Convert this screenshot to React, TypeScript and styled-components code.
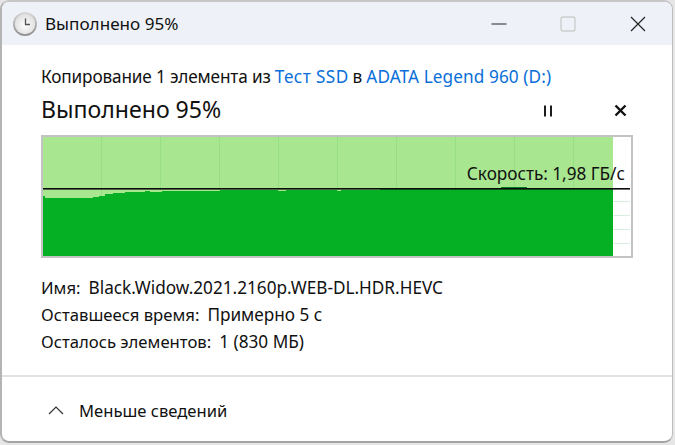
import React from "react";
import styled, { createGlobalStyle } from "styled-components";

const Global = createGlobalStyle`
  html, body { margin: 0; padding: 0; width: 675px; height: 445px; overflow: hidden; background: #d8d8d8; }
  * { box-sizing: border-box; }
`;

const Desktop = styled.div`
  width: 675px;
  height: 445px;
  padding: 0 2px 2px 0;
  background: #e6e6e6;
  font-family: "Noto Sans", "Open Sans", sans-serif;
  color: #111;
`;

const Win = styled.main`
  width: 673px;
  height: 443px;
  display: flex;
  flex-direction: column;
  background: #fff;
  border-radius: 9px 9px 9px 9px;
  border-style: solid;
  border-width: 2px 1px 2px 2px;
  border-color: #c6c6c6 #bdbdbd #a4a4a4 #b4b4b4;
  overflow: hidden;
`;

const TitleBar = styled.header`
  height: 43px;
  flex: none;
  display: flex;
  align-items: center;
  background: #eef2f8;
  padding-left: 10px;
`;

const TitleText = styled.span`
  margin-left: 7px;
  font-size: 17.1px;
  line-height: 20px;
  color: #111;
  flex: 1;
`;

const WinButton = styled.div<{ $w: number }>`
  width: ${(p) => p.$w}px;
  display: flex;
  justify-content: center;
  align-items: center;
  height: 20px;
`;

const Body = styled.section`
  padding: 22px 39px 0;
  flex: 1;
  display: flex;
  flex-direction: column;
`;

const CopyLine = styled.div`
  font-size: 17.2px;
  line-height: 20px;
  height: 20px;
  white-space: nowrap;
  display: flex;
  gap: 4px;
`;

const Lead = styled.span<{ $ls: number }>`
  letter-spacing: ${(p) => p.$ls}px;
`;

const Link = styled.span<{ $ls: number }>`
  color: #0a6fd8;
  letter-spacing: ${(p) => p.$ls}px;
`;

const HeadRow = styled.div`
  display: flex;
  align-items: center;
  height: 30px;
  margin-top: 7px;
  margin-bottom: 1px;
`;

const Heading = styled.h1`
  margin: 0;
  flex: 1;
  font-size: 23.1px;
  font-weight: 400;
  line-height: 30px;
  white-space: nowrap;
`;

const ActionIcon = styled.div<{ $mr: number }>`
  display: flex;
  margin-top: 3px;
  margin-right: ${(p) => p.$mr}px;
`;

const Chart = styled.div`
  position: relative;
  width: 592px;
  height: 123px;
  margin-top: 10px;
  border: 2px solid #c3c3c3;
  background: #fff;
`;

const ChartSvg = styled.svg`
  display: block;
`;

const Speed = styled.span`
  position: absolute;
  right: 6px;
  top: 27px;
  font-size: 17.2px;
  line-height: 20px;
  white-space: nowrap;
  color: #111;
`;

const Details = styled.dl`
  margin: 16px 0 0;
  display: flex;
  flex-direction: column;
`;

const DetailRow = styled.div`
  height: 27px;
  display: flex;
  align-items: center;
  gap: 8px;
  font-size: 17.2px;
  white-space: nowrap;
`;

const Term = styled.dt`
  font-size: 16.7px;
`;

const Value = styled.dd`
  margin: 0;
`;

const Footer = styled.footer`
  height: 66px;
  flex: none;
  border-top: 2px solid #e2e2e2;
  display: flex;
  align-items: center;
  padding-left: 46px;
  padding-top: 3px;
  gap: 15px;
  font-size: 16.6px;
`;

const profile: [number, number][] = [
  [0, 196], [2, 198], [50, 197], [56, 196], [62, 194], [70, 193], [82, 192], [102, 191], [107, 192],
  [119, 191], [177, 190], [235, 191], [243, 190], [294, 191], [298, 190], [337, 189], [458, 189], [484, 189],
];

const X0 = 43;
const Y0 = 137;
const RIGHT = 570;

function darkPath() {
  let d = `M0 119`;
  let prev = profile[0][1] - Y0;
  d += ` L0 ${prev}`;
  profile.forEach(([x, y]) => {
    d += ` L${x} ${prev} L${x} ${y - Y0}`;
    prev = y - Y0;
  });
  d += ` L${RIGHT} ${prev} L${RIGHT} 119 Z`;
  return d;
}

const vLines = [101, 160, 219, 278, 337, 396, 455, 514, 573].map((x) => x - X0);
const hLines = [201, 215, 229, 243].map((y) => y - Y0);

function SpeedChart() {
  return (
    <ChartSvg width="588" height="119" viewBox="0 0 588 119">
      <rect x="0" y="0" width={RIGHT} height="64" fill="#a8e690" />
      {vLines.map((x) => (
        <rect key={x} x={x} y="0" width="1" height="62" fill="#98de84" />
      ))}
      {hLines.map((y) => (
        <rect key={y} x={RIGHT} y={y} width="17" height="1" fill="#d6eede" />
      ))}
      <path d={darkPath()} fill="#06b025" />
      <rect x="458" y="50" width="26" height="1" fill="#0a7a20" />
      <rect x="0" y="51" width="587" height="1.6" fill="#0c0c0c" />
    </ChartSvg>
  );
}

function Clock() {
  return (
    <svg width="26" height="26" viewBox="0 0 26 26">
      <defs>
        <linearGradient id="rim" x1="0" y1="0" x2="0" y2="1">
          <stop offset="0" stopColor="#d8d8d8" />
          <stop offset="1" stopColor="#8e8e8e" />
        </linearGradient>
        <radialGradient id="face" cx="0.5" cy="0.55" r="0.6">
          <stop offset="0" stopColor="#fdfdfd" />
          <stop offset="1" stopColor="#dcdcdc" />
        </radialGradient>
      </defs>
      <circle cx="13" cy="13" r="12" fill="url(#rim)" />
      <circle cx="13" cy="13" r="10.2" fill="url(#face)" />
      <path d="M13.5 7.5V13.5H18" fill="none" stroke="#555" strokeWidth="1.3" />
    </svg>
  );
}

export default function App() {
  return (
    <>
      <Global />
      <Desktop>
        <Win>
          <TitleBar>
            <Clock />
            <TitleText>Выполнено 95%</TitleText>
            <WinButton $w={67}>
              <svg width="16" height="16" viewBox="0 0 16 16">
                <path d="M0.5 8H15.5" stroke="#222" strokeWidth="1" />
              </svg>
            </WinButton>
            <WinButton $w={72}>
              <svg width="16" height="16" viewBox="0 0 16 16">
                <rect x="1" y="1" width="14" height="14" rx="2" fill="none" stroke="#cdcdcd" strokeWidth="1.4" />
              </svg>
            </WinButton>
            <WinButton $w={68}>
              <svg width="16" height="16" viewBox="0 0 16 16">
                <path d="M1 1L15 15M15 1L1 15" stroke="#222" strokeWidth="1.2" />
              </svg>
            </WinButton>
          </TitleBar>
          <Body>
            <CopyLine>
              <Lead $ls={-0.15}>Копирование 1 элемента из</Lead>
              <Link $ls={0.4}>Тест SSD</Link>
              <Lead $ls={0}>в</Lead>
              <Link $ls={0.1}>ADATA Legend 960 (D:)</Link>
            </CopyLine>
            <HeadRow>
              <Heading>Выполнено 95%</Heading>
              <ActionIcon $mr={60}>
                <svg width="12" height="12" viewBox="0 0 12 12">
                  <path d="M3 0.5V11.5M9 0.5V11.5" stroke="#111" strokeWidth="1.9" />
                </svg>
              </ActionIcon>
              <ActionIcon $mr={6}>
                <svg width="13" height="13" viewBox="0 0 13 13">
                  <path d="M1.5 1.5L11.5 11.5M11.5 1.5L1.5 11.5" stroke="#111" strokeWidth="2.4" />
                </svg>
              </ActionIcon>
            </HeadRow>
            <Chart>
              <SpeedChart />
              <Speed>Скорость: 1,98 ГБ/с</Speed>
            </Chart>
            <Details>
              <DetailRow>
                <Term>Имя:</Term>
                <Value>Black.Widow.2021.2160p.WEB-DL.HDR.HEVC</Value>
              </DetailRow>
              <DetailRow>
                <Term>Оставшееся время:</Term>
                <Value>Примерно 5 с</Value>
              </DetailRow>
              <DetailRow>
                <Term>Осталось элементов:</Term>
                <Value>1 (830 МБ)</Value>
              </DetailRow>
            </Details>
          </Body>
          <Footer>
            <svg width="16" height="9" viewBox="0 0 16 9">
              <path d="M1 8L8 1L15 8" fill="none" stroke="#333" strokeWidth="1.2" />
            </svg>
            <span>Меньше сведений</span>
          </Footer>
        </Win>
      </Desktop>
    </>
  );
}
